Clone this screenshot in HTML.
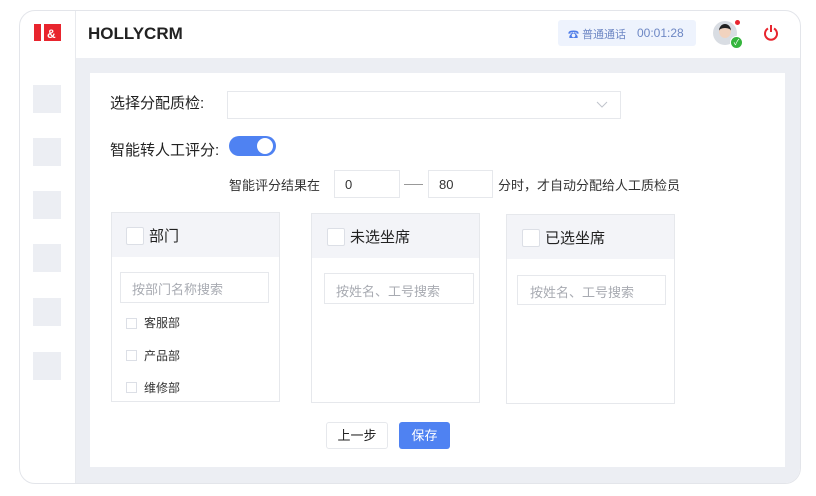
<!DOCTYPE html><html><head><meta charset="utf-8"><style>
*{box-sizing:border-box;margin:0;padding:0}
body{width:816px;height:496px;background:#fff;font-family:"Liberation Sans","Noto Sans CJK SC",sans-serif;position:relative;overflow:hidden;color:#333}
.a{position:absolute}
.card{left:19px;top:10px;width:782px;height:474px;border:1px solid #e3e5ea;border-radius:16px;overflow:hidden;background:#fff}
.box{border:1px solid #e6e8ec;background:#fff}
.cb{width:18px;height:18px;border:1px solid #dcdfe6;background:#fff;border-radius:2px}
.scb{width:11px;height:11px;border:1px solid #dcdfe6}
.ph{color:#a8abb2;font-size:13px}
.t{font-size:15px;color:#222}
</style></head><body>
<div class="a card">
  <div class="a" style="left:55px;top:0;width:1px;height:474px;background:#e8eaee"></div>
  <div class="a" style="left:56px;top:47px;width:726px;height:427px;background:#eceef3"></div>
</div>
<div class="a" style="left:34px;top:24px;width:27px;height:17px;background:#e8252e"></div>
<div class="a" style="left:41px;top:24px;width:3px;height:17px;background:#fff"></div>
<div class="a" style="left:47px;top:28px;color:#fff;font-weight:bold;font-size:12px;line-height:12px">&amp;</div>
<div class="a" style="left:88px;top:24px;font-size:17px;font-weight:bold;color:#222">HOLLYCRM</div>
<div class="a" style="left:558px;top:20px;width:138px;height:26px;background:#eef3fd;border-radius:3px"></div>
<div class="a" style="left:568px;top:26px;font-size:11px;color:#4e7ce8">☎ <span style="color:#6d87c4">普通通话</span></div>
<div class="a" style="left:637px;top:26px;font-size:12px;color:#6d87c4">00:01:28</div>
<div class="a" style="left:713px;top:21px;width:24px;height:24px;border-radius:50%;background:#d9dde3"></div>
<div class="a" style="left:719px;top:24px;width:12px;height:14px;border-radius:50%;background:#f1d3bf;border-top:4px solid #222"></div>
<div class="a" style="left:730px;top:36px;width:13px;height:13px;border-radius:50%;background:#35b53d;border:1px solid #fff;color:#fff;font-size:8px;text-align:center;line-height:11px">✓</div>
<div class="a" style="left:735px;top:20px;width:5px;height:5px;border-radius:50%;background:#e8252e"></div>
<svg class="a" style="left:763px;top:24px" width="16" height="17" viewBox="0 0 16 17"><path d="M5 4.5A6 6 0 1 0 11 4.5" fill="none" stroke="#e8252e" stroke-width="2"/><path d="M8 1v7" stroke="#e8252e" stroke-width="2"/></svg>
<div class="a" style="left:33px;top:85px;width:28px;height:28px;background:#eceef3"></div>
<div class="a" style="left:33px;top:138px;width:28px;height:28px;background:#eceef3"></div>
<div class="a" style="left:33px;top:191px;width:28px;height:28px;background:#eceef3"></div>
<div class="a" style="left:33px;top:244px;width:28px;height:28px;background:#eceef3"></div>
<div class="a" style="left:33px;top:298px;width:28px;height:28px;background:#eceef3"></div>
<div class="a" style="left:33px;top:352px;width:28px;height:28px;background:#eceef3"></div>
<div class="a" style="left:90px;top:73px;width:695px;height:394px;background:#fff"></div>
<div class="a t" style="left:110px;top:92px">选择分配质检:</div>
<div class="a box" style="left:227px;top:91px;width:394px;height:28px"></div>
<svg class="a" style="left:596px;top:101px" width="12" height="8"><path d="M1 1l5 5 5-5" fill="none" stroke="#c0c4cc"/></svg>
<div class="a t" style="left:110px;top:139px">智能转人工评分:</div>
<div class="a" style="left:229px;top:136px;width:47px;height:20px;border-radius:10px;background:#4f82f2"></div>
<div class="a" style="left:257px;top:138px;width:16px;height:16px;border-radius:50%;background:#fff"></div>
<div class="a" style="left:229px;top:175px;font-size:13px">智能评分结果在</div>
<div class="a box" style="left:334px;top:170px;width:66px;height:28px;font-size:13px;padding:6px 10px">0</div>
<div class="a" style="left:404px;top:184px;width:19px;height:1px;background:#999"></div>
<div class="a box" style="left:428px;top:170px;width:65px;height:28px;font-size:13px;padding:6px 10px">80</div>
<div class="a" style="left:498px;top:175px;font-size:13px">分时，才自动分配给人工质检员</div>

<div class="a box" style="left:111px;top:212px;width:169px;height:190px"></div>
<div class="a" style="left:112px;top:213px;width:167px;height:44px;background:#f3f4f8"></div>
<div class="a cb" style="left:126px;top:227px"></div>
<div class="a t" style="left:149px;top:225px">部门</div>
<div class="a box" style="left:120px;top:272px;width:149px;height:31px"></div>
<div class="a ph" style="left:132px;top:279px">按部门名称搜索</div>
<div class="a scb" style="left:126px;top:318px"></div><div class="a" style="left:144px;top:314px;font-size:12px">客服部</div>
<div class="a scb" style="left:126px;top:350px"></div><div class="a" style="left:144px;top:347px;font-size:12px">产品部</div>
<div class="a scb" style="left:126px;top:382px"></div><div class="a" style="left:144px;top:379px;font-size:12px">维修部</div>

<div class="a box" style="left:311px;top:213px;width:169px;height:190px"></div>
<div class="a" style="left:312px;top:214px;width:167px;height:44px;background:#f3f4f8"></div>
<div class="a cb" style="left:327px;top:228px"></div>
<div class="a t" style="left:350px;top:226px">未选坐席</div>
<div class="a box" style="left:324px;top:273px;width:150px;height:31px"></div>
<div class="a ph" style="left:336px;top:281px">按姓名、工号搜索</div>

<div class="a box" style="left:506px;top:214px;width:169px;height:190px"></div>
<div class="a" style="left:507px;top:215px;width:167px;height:44px;background:#f3f4f8"></div>
<div class="a cb" style="left:522px;top:229px"></div>
<div class="a t" style="left:545px;top:227px">已选坐席</div>
<div class="a box" style="left:517px;top:275px;width:149px;height:30px"></div>
<div class="a ph" style="left:530px;top:282px">按姓名、工号搜索</div>

<div class="a box" style="left:326px;top:422px;width:62px;height:27px;border-radius:3px;font-size:13px;text-align:center;line-height:25px;color:#222">上一步</div>
<div class="a" style="left:399px;top:422px;width:51px;height:27px;border-radius:3px;background:#4f82f2;color:#fff;font-size:13px;text-align:center;line-height:27px">保存</div>
</body></html>
